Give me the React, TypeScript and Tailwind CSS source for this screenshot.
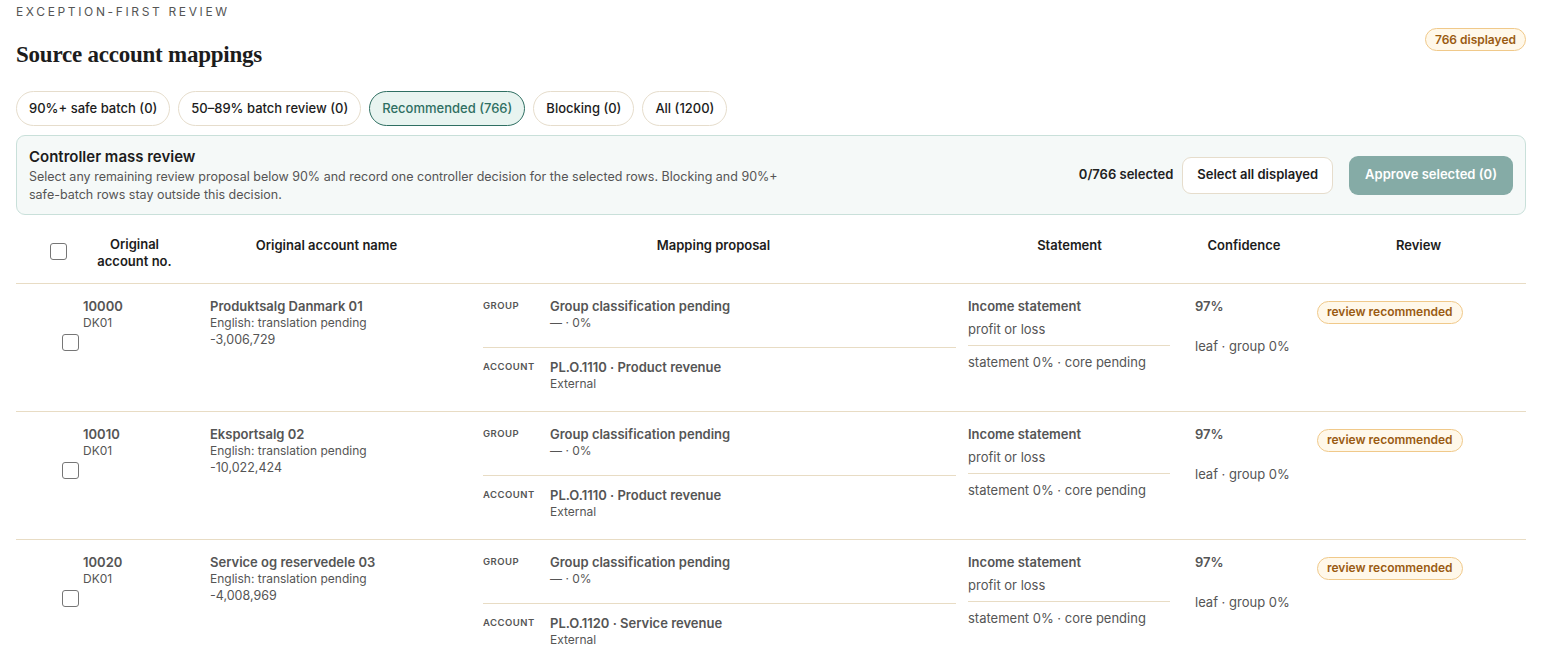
const rows = [
  { no: "10000", name: "Produktsalg Danmark 01", amount: "-3,006,729", account: "PL.O.1110 · Product revenue" },
  { no: "10010", name: "Eksportsalg 02", amount: "-10,022,424", account: "PL.O.1110 · Product revenue" },
  { no: "10020", name: "Service og reservedele 03", amount: "-4,008,969", account: "PL.O.1120 · Service revenue" },
];

const tabs = [
  { label: "90%+ safe batch (0)" },
  { label: "50–89% batch review (0)" },
  { label: "Recommended (766)", active: true },
  { label: "Blocking (0)" },
  { label: "All (1200)" },
];

const cols = "grid grid-cols-[55px_127px_273px_485px_227px_122px_227px]";

function Box() {
  return <div className="w-[17px] h-[17px] rounded-[3px] border border-[#767676] bg-white" />;
}

export default function App() {
  return (
    <div className="bg-white h-[655px] overflow-hidden px-4 pt-[5px] text-[#1c1c1c]" style={{ fontFamily: "Inter, 'Noto Sans', sans-serif" }}>
      <div className="flex justify-between">
        <div>
          <div className="text-[12px] tracking-[0.22em] text-[#555] leading-[14px]">EXCEPTION-FIRST REVIEW</div>
          <h1 className="mt-[22px] text-[23px] font-bold leading-[28px] tracking-[-0.01em]" style={{ fontFamily: "'Liberation Serif', serif" }}>
            Source account mappings
          </h1>
        </div>
        <div className="mt-[23px] h-[23px] px-[9px] flex items-center rounded-full border border-[#f0c98a] bg-[#fff8ea] text-[12px] font-semibold text-[#9a5b12]">
          766 displayed
        </div>
      </div>

      <div className="mt-[22px] flex gap-2">
        {tabs.map((t) => (
          <div
            key={t.label}
            className={
              "h-[35px] px-3 flex items-center rounded-full border text-[13px] font-medium " +
              (t.active ? "border-[#2f6f62] bg-[#e8f4f0] text-[#2f6f62]" : "border-[#e6ddcc] bg-white text-[#1c1c1c]")
            }
          >
            {t.label}
          </div>
        ))}
      </div>

      <div className="mt-[9px] h-[80px] rounded-[9px] border border-[#c9e0da] bg-[#f5f9f8] pl-3 pr-3 flex items-center justify-between">
        <div className="max-w-[780px]">
          <div className="text-[15px] font-semibold leading-[20px]">Controller mass review</div>
          <div className="text-[12.5px] text-[#555] leading-[18px] mt-[1px]">
            Select any remaining review proposal below 90% and record one controller decision for the selected rows. Blocking and 90%+ safe-batch rows stay outside this decision.
          </div>
        </div>
        <div className="flex items-center">
          <span className="text-[13px] font-semibold text-[#222] mr-[9px]">0/766 selected</span>
          <div className="h-[37px] px-[14px] flex items-center rounded-[9px] border border-[#e6ddcc] bg-white text-[13px] font-semibold">Select all displayed</div>
          <div className="ml-4 h-[39px] px-4 flex items-center rounded-[9px] bg-[#85aba6] text-white text-[13px] font-semibold">Approve selected (0)</div>
        </div>
      </div>

      <div className={cols + " mt-[12px] h-[57px] border-b border-[#e8dcc4] text-[13px] font-semibold"}>
        <div className="flex items-center justify-end pr-[4px] pt-[2px]"><div className="mt-[-10px]"><Box /></div></div>
        <div className="text-center leading-[17px] pt-[9px]">Original<br />account no.</div>
        <div className="text-center pt-[9px] pr-[16px]">Original account name</div>
        <div className="text-center pt-[9px]">Mapping proposal</div>
        <div className="text-center pt-[9px]">Statement</div>
        <div className="text-center pt-[9px]">Confidence</div>
        <div className="text-center pt-[9px]">Review</div>
      </div>

      {rows.map((r) => (
        <div key={r.no} className={cols + " h-[128px] border-b border-[#e8dcc4] text-[#555]"}>
          <div />
          <div className="pt-[14px]">
            <div className="pl-[12px] text-[13px] font-semibold leading-[16px]">{r.no}</div>
            <div className="pl-[12px] text-[12px] leading-[17px]">DK01</div>
            <div className="ml-[-9px] mt-[3px]"><Box /></div>
          </div>
          <div className="pt-[14px] pl-[12px]">
            <div className="text-[13px] font-semibold leading-[16px]">{r.name}</div>
            <div className="text-[12px] leading-[17px]">English: translation pending</div>
            <div className="text-[12.5px] leading-[17px]">{r.amount}</div>
          </div>
          <div className="pt-[14px] pl-[12px]">
            <div className="flex h-[50px] border-b border-[#e8dcc4]">
              <div className="w-[67px] text-[9.5px] tracking-[0.05em] font-semibold pt-[1px]">GROUP</div>
              <div>
                <div className="text-[13px] font-semibold leading-[16px]">Group classification pending</div>
                <div className="text-[12px] leading-[18px]">— · 0%</div>
              </div>
            </div>
            <div className="flex pt-[11px]">
              <div className="w-[67px] text-[9.5px] tracking-[0.05em] font-semibold pt-[1px]">ACCOUNT</div>
              <div>
                <div className="text-[13px] font-semibold leading-[16px]">{r.account}</div>
                <div className="text-[12px] leading-[18px]">External</div>
              </div>
            </div>
          </div>
          <div className="pt-[14px] pl-[12px] pr-[13px]">
            <div className="text-[13px] font-semibold leading-[16px]">Income statement</div>
            <div className="text-[13px] leading-[16px] mt-[7px] pb-[8px] border-b border-[#e8dcc4]">profit or loss</div>
            <div className="text-[13px] leading-[16px] mt-[8px]">statement 0% · core pending</div>
          </div>
          <div className="pt-[14px] pl-[12px]">
            <div className="text-[13px] font-semibold leading-[16px]">97%</div>
            <div className="text-[13px] leading-[16px] mt-[24px]">leaf · group 0%</div>
          </div>
          <div className="pt-[14px] pl-[12px]">
            <span className="inline-flex h-[23px] px-[9px] items-center rounded-full border border-[#f0c98a] bg-[#fff8ea] text-[12px] font-semibold text-[#9a5b12]">
              review recommended
            </span>
          </div>
        </div>
      ))}
    </div>
  );
}
